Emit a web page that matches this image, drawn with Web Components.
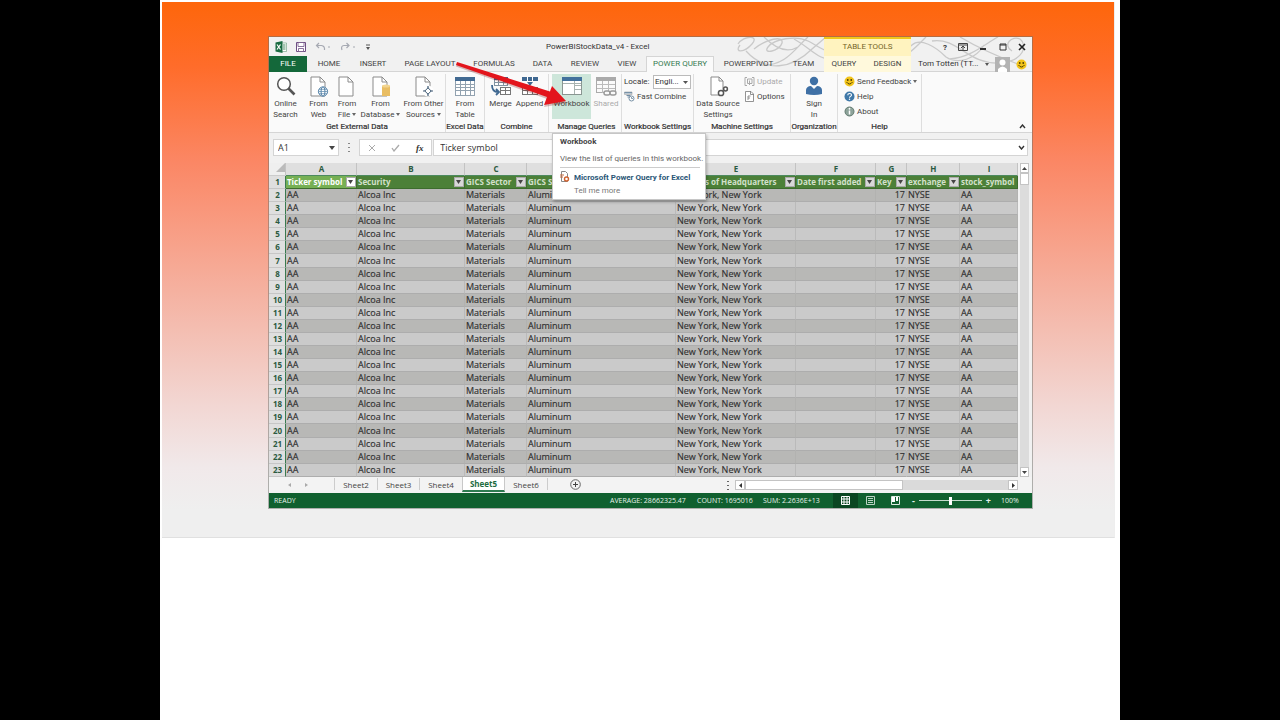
<!DOCTYPE html>
<html lang="en">
<head>
<meta charset="utf-8">
<title>PowerBIStockData_v4 - Excel</title>
<style>
html,body{margin:0;min-height:100%;background:#000}
body{font-family:Roboto,"Open Sans",sans-serif;font-size:8px;line-height:11px;color:#333}
</style>
</head>
<body>
<slide-page>
  <excel-window></excel-window>
</slide-page>
<script>
const define=(name,css,html)=>customElements.define(name,class extends HTMLElement{
  connectedCallback(){
    if(this.shadowRoot)return;
    const root=this.attachShadow({mode:"open"});
    const markup=typeof html==="function"?html(this):html;
    root.innerHTML=`<style>*{box-sizing:border-box}button,input,select{font:inherit;color:inherit;margin:0;padding:0;border:0;background:none;border-radius:0}${css}</style>${markup}`;
  }
});

/* Column list of a grid whose tracks share the width in the given proportions. */
const cols=(...w)=>"grid-template-columns:"+w.map(x=>`minmax(0,${x}fr)`).join(" ");
const caret=`<svg class="caret" width="4" height="3" viewBox="0 0 4 3" aria-hidden="true"><path d="M0 0h4L2 3z" fill="#666"/></svg>`;
const caretCss=".caret{display:inline-block;margin:0 0 1px 2px;vertical-align:middle}";

const page=`<path d="M3 1h9l5 5v14H3z" fill="#fff" stroke="#8b8b8b"/><path d="M12 1v5h5" fill="none" stroke="#8b8b8b"/>`;
const tableIcon=(c)=>`<rect x="1.500" y="1.500" width="19" height="18" fill="#fff" stroke="${c[1]}"/><rect x="1" y="1" width="20" height="4" fill="${c[0]}"/><path d="M6.500 5v14M11.500 5v14M16.500 5v14M2 8.500h18M2 11.500h18M2 14.500h18" stroke="${c[1]}" fill="none"/>`;
const icons={
  search:`<circle cx="9" cy="8" r="6.300" fill="#fff" stroke="#555" stroke-width="1.500"/><path d="M13.500 12.500l6 6" stroke="#555" stroke-width="2.600"/>`,
  web:`${page}<g fill="#fff" stroke="#5382a8"><circle cx="15" cy="15.500" r="4.600"/><ellipse cx="15" cy="15.500" rx="2" ry="4.600"/><path d="M10.500 15.500h9M11 13.300h8M11 17.700h8" fill="none" stroke-width=".7"/></g>`,
  file:page,
  database:`${page}<path d="M12 10h8v10h-8z" fill="#e9bd62"/><ellipse cx="16" cy="10" rx="4" ry="1.500" fill="#f2d48f"/>`,
  other:`${page}<circle cx="15" cy="15" r="5.500" fill="#fff"/><path d="M15 10v10M10 15h10" stroke="#405b75" stroke-width="1.200"/><path d="M15 11.800l3.200 3.200-3.200 3.200-3.200-3.200z" fill="#fff" stroke="#405b75"/>`,
  table:tableIcon(["#426a92","#92a2b0"]),
  merge:`<rect x="4.500" y="1.500" width="13" height="8" fill="#fff" stroke="#8293a2"/><path d="M4 1h14v3H4z" fill="#3f6891"/><path d="M8.500 4v5M13.500 4v5M5 6.500h12" stroke="#8293a2"/><rect x="10.500" y="11.500" width="10" height="7" fill="#fff" stroke="#777"/><path d="M11 14.500h9M15.500 12v6" stroke="#777"/><path d="M2 9c0 5 2 7 6 7M6 13l3 3-3 3" fill="none" stroke="#3f6891" stroke-width="1.800"/>`,
  append:`<path d="M3 1h16v4H3z" fill="#3f6891"/><path d="M8.500 1v4M13.500 1v4" stroke="#fff"/><path d="M8 6h6l-3 4z" fill="#3f6891"/><rect x="3.500" y="11.500" width="15" height="7" fill="#fff" stroke="#777"/><path d="M4 14.500h14M8.500 12v6M13.500 12v6" stroke="#777"/>`,
  workbook:`<rect x="1.500" y="1.500" width="19" height="17" fill="#fff" stroke="#8a9692"/><path d="M1 1h20v4H1z" fill="#42719c"/><path d="M13.500 5v13M14 9.500h6M14 13.500h6M2 7.500h18" stroke="#a8b3b0"/>`,
  shared:`<rect x="1.500" y="1.500" width="19" height="15" fill="#fafafa" stroke="#aaa"/><path d="M1 1h20v4H1z" fill="#aaa"/><path d="M7.500 5v12M13.500 5v12M2 8.500h18M2 12.500h18" stroke="#bbb"/><g fill="#fafafa" stroke="#999" stroke-width="1.400"><rect x="9" y="15" width="6" height="4" rx="2"/><rect x="15" y="15" width="6" height="4" rx="2"/></g>`,
  source:`<path d="M4 1h8l4 4v14H4z" fill="#fff" stroke="#8b8b8b"/><path d="M12 1v4h4" fill="none" stroke="#8b8b8b"/><g fill="#fff" stroke="#555" stroke-width="1.500"><circle cx="14" cy="17" r="2.600"/><circle cx="18.500" cy="13" r="1.900"/></g>`,
  person:`<circle cx="11" cy="5" r="4.200" fill="#3f70a5"/><path d="M3 18v-4c0-2 2-4 5-4l3 3 3-3c3 0 5 2 5 4v4q-8 2-16 0z" fill="#3f70a5"/>`,
  fast:`<path d="M1 2h15v5H1z" fill="#fff" stroke="#888"/><path d="M1 2h15v3H1z" fill="#7892a8"/><path d="M5 9h8M7 12h5" stroke="#607f9b" stroke-width="1.800"/><circle cx="15" cy="15" r="5" fill="#fff" stroke="#55758f" stroke-width="1.600"/><path d="M15 12v3h3" fill="none" stroke="#55758f" stroke-width="1.400"/>`,
  update:`<path d="M6 3H2v16h4M16 3h4v16h-4" fill="none" stroke="#aaa" stroke-width="2"/><path d="M7 6h9v9H7z" fill="none" stroke="#aaa" stroke-width="2"/><path d="M11 9v9" stroke="#aaa" stroke-width="2"/>`,
  options:`<path d="M3 1h11l5 5v15H3z" fill="#fff" stroke="#777" stroke-width="1.600"/><path d="M13 1v6h6M8 10v8M8 10h5M8 14h4" fill="none" stroke="#777" stroke-width="1.600"/>`,
  smile:`<circle cx="11" cy="11" r="10" fill="#f2c41a"/><circle cx="7.500" cy="8" r="1.800" fill="#514100"/><circle cx="14.500" cy="8" r="1.800" fill="#514100"/><path d="M5 12q6 8 12 0" fill="none" stroke="#514100" stroke-width="2"/>`,
  help:`<circle cx="11" cy="11" r="10" fill="#3f78a8"/><path d="M7.500 8.500c0-5 7.500-4.500 7.500-.5 0 3-4 2.500-4 5.500" fill="none" stroke="#fff" stroke-width="2.200"/><circle cx="11" cy="16.500" r="1.500" fill="#fff"/>`,
  about:`<circle cx="11" cy="11" r="9" fill="#8da39a" stroke="#61796f" stroke-width="2"/><path d="M11 9v8" stroke="#fff" stroke-width="3"/><circle cx="11" cy="5.500" r="1.800" fill="#fff"/>`
};
const svg=(name,size)=>`<svg width="${size}" height="${size}" viewBox="0 0 22 22" aria-hidden="true">${icons[name]}</svg>`;

define("slide-page",`
:host{display:block;width:75%;margin:0 auto;background:#fff;min-height:100vh;padding:2px 5px 0 2px;box-sizing:border-box}
.slide{background:linear-gradient(#fe660b 0,#ff6c2a 12%,#fb8765 30%,#f5b1a0 54%,#f2d6d2 75%,#f1e9ea 87%,#efefef 95%);padding:35px 82px 29px 107px;border-bottom:1px solid #e0e0e0;border-right:1px solid #eee}
`,`<main class="slide"><slot></slot></main>`);

define("excel-window",`
:host{display:block;position:relative;background:#f1f1f1;box-shadow:0 0 0 1px #6b6f6a80}
screen-tip{position:absolute;left:283px;top:96px}
.arrow{position:absolute;left:184px;top:22px;pointer-events:none}
.deco{position:absolute;right:0;top:0}
.top{position:relative}
`,`
<svg class="deco" width="296" height="34" viewBox="0 0 296 34" fill="none" stroke="#c9c9c9" stroke-width="1.300" aria-hidden="true">
<path d="M2 7C8-2 24-2 16 7S-2 16 4 8M18 12C30 2 48-2 46 6S26 18 32 10 60-2 72 4 96 22 112 12M10 14C30 36 56 32 76 12L90 0M24 28C50 30 60 10 72 0M58 2C76 12 80 22 100 24 128 24 130 4 146 0M28 0C40 12 52 16 62 10M150 26C170 22 180 10 190 0M172 2C156 14 166 18 176 8 184 0 200 10 210 20 222 28 240 22 248 8M196 4C222 0 232 28 264 26 288 24 292 8 284 2 276-2 266 8 276 14M214 22C236 20 250 6 262 0M224 0C244 12 262 20 290 30"/>
</svg>
<title-bar class="top"></title-bar><ribbon-tabs class="top"></ribbon-tabs><ribbon-panel></ribbon-panel><formula-bar></formula-bar><data-grid></data-grid><sheet-tabs></sheet-tabs><status-bar></status-bar>
<screen-tip></screen-tip>
<svg class="arrow" width="116" height="52" viewBox="0 0 116 52" aria-hidden="true"><path d="M4 3L97 33 98 28 114 43 91 47 94 39 3 6.500z" fill="#700" opacity=".25" transform="translate(0 1)"/><path d="M4 3L97 32.500 99 27 113 42 91 46 94 38 3 6z" fill="#e3151c"/></svg>
`);

define("title-bar",`
:host{display:grid;${cols(277,101,177,87,121)};height:19px}
.quick,.ctrl{display:flex;align-items:center}
.quick{gap:9px;padding-left:6px}
.quick button,.ctrl button{display:flex}
.name{text-align:center;line-height:20px;white-space:nowrap}
.tools{background:#fff3bf;border-top:2px solid #f1c719;text-align:center;line-height:16px;color:#756628;white-space:nowrap}
.ctrl{justify-content:space-between;padding:0 6px 0 32px}
`,`
<div class="quick">
<button aria-label="Excel"><svg width="12" height="12" viewBox="0 0 24 24"><path d="M13 4h10v17H13z" fill="#fff" stroke="#4a8a63"/><path d="M16 8h5M16 12h5M16 16h5" stroke="#4a8a63" stroke-width="2"/><path d="M1 3l14-3v24L1 21z" fill="#1a6b41"/><path d="M4 7l7 10M11 7L4 17" stroke="#fff" stroke-width="2.500"/></svg></button>
<button aria-label="Save"><svg width="10" height="10" viewBox="0 0 20 20"><path d="M1 1h18v18H1z" fill="#fff" stroke="#6e4f83" stroke-width="2"/><path d="M4 1h12v8H4zM5 13h10v6H5z" fill="#fff" stroke="#6e4f83" stroke-width="1.600"/></svg></button>
<button aria-label="Undo"><svg width="16" height="10" viewBox="0 0 32 20" fill="none" stroke="#a6a9b2" stroke-width="2.400"><path d="M8 2L3 7l5 5M3 7h10q7 1 6 9"/><path d="M26 10h4"/></svg></button>
<button aria-label="Redo"><svg width="16" height="10" viewBox="0 0 32 20" fill="none" stroke="#a6a9b2" stroke-width="2.400"><path d="M13 2l5 5-5 5M18 7H8Q1 8 4 16"/><path d="M26 10h4"/></svg></button>
<button aria-label="Customize Quick Access Toolbar"><svg width="6" height="8" viewBox="0 0 6 8"><path d="M1 2h4" stroke="#555"/><path d="M1 4h4L3 7z" fill="#555"/></svg></button>
</div>
<div class="name">PowerBIStockData_v4 - Excel</div><div></div><div class="tools">TABLE TOOLS</div>
<div class="ctrl">
<button aria-label="Help"><b>?</b></button>
<button aria-label="Ribbon display options"><svg width="10" height="8" viewBox="0 0 10 8"><path d="M.5.500h9v7h-9zM1 2h8M5 7V3M3 5l2-2 2 2" fill="none" stroke="#444"/></svg></button>
<button aria-label="Minimize"><svg width="8" height="8"><path d="M1 6h6" stroke="#333" stroke-width="2"/></svg></button>
<button aria-label="Restore"><svg width="8" height="8"><path d="M1 1h6v6H1zM1 2h6" fill="none" stroke="#333"/></svg></button>
<button aria-label="Close"><svg width="8" height="8"><path d="M1 1l6 6M7 1L1 7" stroke="#222" stroke-width="1.600"/></svg></button>
</div>`);

const tabs=[["FILE",38,"file"],["HOME",44],["INSERT",44],["PAGE LAYOUT",70],["FORMULAS",58],["DATA",39],["REVIEW",46],["VIEW",38],["POWER QUERY",68,"on"],["POWERPIVOT",69],["TEAM",41],["QUERY",40,"t"],["DESIGN",47,"t"]];
define("ribbon-tabs",`
:host{display:grid;${cols(...tabs.map(t=>t[1]),121)};height:16px;line-height:16px;border-bottom:1px solid #d5d5d5}
button{min-width:0;white-space:nowrap;display:flex;justify-content:center;color:#444}
.file{background:#14683a;color:#fff}
.on{background:#fafafa;border:1px solid #d5d5d5;border-bottom:0;color:#357a52;height:16px;line-height:14px}
.t{background:#fff9dc}
.user{min-width:0;display:flex;align-items:center;padding:0 5px 0 7px;gap:6px;white-space:nowrap}
.user span{flex:1}
svg{flex:none}
`,()=>tabs.map(([t,w,c])=>`<button class="${c||""}">${t}</button>`).join("")+
`<div class="user"><span>Tom Totten (TT...</span><svg width="4" height="3"><path d="M0 0h4L2 3z" fill="#555"/></svg><svg width="15" height="15" viewBox="0 0 15 15"><path d="M0 0h15v15H0z" fill="#b3b3b3"/><circle cx="7.500" cy="5.500" r="3" fill="#fff"/><path d="M3 15v-3q4.500-5 9 0v3z" fill="#fff"/></svg>${svg("smile",11)}</div>`);

define("ribbon-group",`
:host{display:flex;flex-direction:column;min-width:0;border-right:1px solid #dedede}
.items{flex:1;display:flex;min-height:0}
.label{line-height:11px;white-space:nowrap;display:flex;justify-content:center;color:#333;-webkit-text-stroke:.2px}
`,(el)=>`<div class="items"><slot></slot></div><div class="label">${el.getAttribute("label")}</div>`);

define("ribbon-button",`
:host{display:block;flex:var(--w) 1 0;min-width:0;color:#444}
:host([on]) button{background:#cde6da}
:host([off]){color:#aaa}
button{width:100%;height:45px;display:flex;flex-direction:column;align-items:center;line-height:11px;padding-top:2px;white-space:nowrap}
button>svg{display:block;flex:none}
${caretCss}
`,(el)=>{
  const lines=el.getAttribute("text").split("|").map(t=>`<span>${t}</span>`);
  if(el.hasAttribute("menu"))lines.push(lines.pop().replace("</span>",caret+"</span>"));
  return `<button>${svg(el.getAttribute("icon"),22)}${lines.join("")}</button>`;
});

define("ribbon-line",`
:host{display:block;color:#444}
:host([off]){color:#aaa}
button{display:flex;align-items:center;gap:2px;height:15px;white-space:nowrap}
${caretCss}
`,(el)=>`<button>${svg(el.getAttribute("icon"),11)}<span>${el.getAttribute("text")}${el.hasAttribute("menu")?caret:""}</span></button>`);

define("ribbon-panel",`
:host{display:grid;${cols(177,39,64,73,72,97,47,84,110)};height:61px;background:#fafafa;border-bottom:1px solid #d5d5d5;padding:2px 0 0}
.stack{display:flex;flex-direction:column;padding-left:2px;flex:var(--w,1) 1 0;min-width:0}
.loc{display:flex;align-items:center;justify-content:space-between;height:15px;padding-right:2px;white-space:nowrap}
.sel{position:relative;display:flex}
select{appearance:none;width:38px;height:14px;border:1px solid #bbb;background:#fff;padding:0 0 0 1px;line-height:12px}
.sel svg{position:absolute;right:3px;top:6px}
.end{display:flex;justify-content:flex-end;align-items:flex-end;padding:0 6px 3px}
.end button{display:flex}
.manage{padding-left:3px}
`,`
<ribbon-group label="Get External Data">
<ribbon-button icon="search" text="Online|Search" style="--w:33"></ribbon-button>
<ribbon-button icon="web" text="From|Web" style="--w:33"></ribbon-button>
<ribbon-button icon="file" text="From|File" menu style="--w:24"></ribbon-button>
<ribbon-button icon="database" text="From|Database" menu style="--w:43"></ribbon-button>
<ribbon-button icon="other" text="From Other|Sources" menu style="--w:43"></ribbon-button></ribbon-group>
<ribbon-group label="Excel Data"><ribbon-button icon="table" text="From|Table" style="--w:1"></ribbon-button></ribbon-group>
<ribbon-group label="Combine"><ribbon-button icon="merge" text="Merge" style="--w:31"></ribbon-button><ribbon-button icon="append" text="Append" style="--w:27"></ribbon-button><div style="flex:5"></div></ribbon-group>
<ribbon-group label="Manage Queries" class="manage"><ribbon-button icon="workbook" text="Workbook" on style="--w:39"></ribbon-button><ribbon-button icon="shared" text="Shared" off style="--w:30"></ribbon-button></ribbon-group>
<ribbon-group label="Workbook Settings"><div class="stack"><div class="loc"><label for="loc">Locale:</label><span class="sel"><select id="loc"><option>Engli...</option></select><svg width="5" height="3"><path d="M0 0h5L2.500 3z" fill="#555"/></svg></span></div><ribbon-line icon="fast" text="Fast Combine"></ribbon-line></div></ribbon-group>
<ribbon-group label="Machine Settings"><ribbon-button icon="source" text="Data Source|Settings" style="--w:48"></ribbon-button><div class="stack" style="--w:46"><ribbon-line icon="update" text="Update" off></ribbon-line><ribbon-line icon="options" text="Options"></ribbon-line></div></ribbon-group>
<ribbon-group label="Organization"><ribbon-button icon="person" text="Sign|In" style="--w:1"></ribbon-button></ribbon-group>
<ribbon-group label="Help"><div class="stack" style="padding-left:6px"><ribbon-line icon="smile" text="Send Feedback" menu></ribbon-line><ribbon-line icon="help" text="Help"></ribbon-line><ribbon-line icon="about" text="About"></ribbon-line></div></ribbon-group>
<div class="end"><button aria-label="Collapse the ribbon"><svg width="7" height="5"><path d="M1 4l2.500-3L6 4" fill="none" stroke="#333" stroke-width="1.400"/></svg></button></div>`);

define("formula-bar",`
:host{display:grid;${cols(66,20,73,595)};height:30px;padding:6px 4px 7px 4px;background:#f1f1f1;font-family:"Open Sans",sans-serif}
.box{background:#fff;border:1px solid #d4d4d4;height:17px;display:flex;align-items:center}
.name{padding:0 3px 0 4px}
.dots{display:flex;align-items:center;justify-content:center}
.fx{justify-content:space-around}
.text{padding:0 2px 0 6px;margin-left:1px}
input{min-width:0;flex:1;font-size:9px;width:10px}
button{display:flex}
i{font:italic bold 9px "Liberation Serif",serif}
`,`
<div class="box name"><input aria-label="Name box" value="A1"><svg width="6" height="4"><path d="M0 0h6L3 4z" fill="#444"/></svg></div>
<div class="dots"><svg width="2" height="9"><path d="M0 0h2v1H0zM0 4h2v1H0zM0 8h2v1H0z" fill="#888"/></svg></div>
<div class="box fx"><button aria-label="Cancel"><svg width="8" height="8"><path d="M1 1l6 6M7 1L1 7" stroke="#aaa"/></svg></button><button aria-label="Enter"><svg width="9" height="8"><path d="M1 4l2 3 5-6" fill="none" stroke="#aaa" stroke-width="1.300"/></svg></button><button aria-label="Insert function"><i>fx</i></button></div>
<div class="box text"><input aria-label="Formula" value="Ticker symbol"><svg width="7" height="5"><path d="M1 1l2.500 3L6 1" fill="none" stroke="#333" stroke-width="1.400"/></svg></div>`);

define("data-grid",`
:host{display:grid;${cols(749,14)};background:#f1f1f1;height:314px;font-family:"Open Sans",sans-serif}
table{height:100%;border-collapse:separate;border-spacing:0;table-layout:fixed;width:100%;font-size:9px;line-height:12px;color:#2f2f2f}
.wrap{min-width:0}
td,th{padding:0 0 0 1px;text-align:left;white-space:nowrap;overflow:hidden;font-weight:400;height:12px}
.letters th{background:#dfdfdf;text-align:center;font-size:8px;color:#2c5a41;border-right:1px solid #c3c3c3;border-bottom:1px solid #4d8a5f;font-weight:700}
.letters th:first-child{background:#efefef;border-bottom-color:#ccc;text-align:right}
tbody th{background:#dfdfdf;color:#2c5a41;font-size:8px;font-weight:700;text-align:center;border-right:1px solid #3a7a50;border-bottom:1px solid #c6c6c6}
tbody td{background:#cacaca;border-right:1px solid #bababa;border-bottom:1px solid #adadad;-webkit-text-stroke:.15px}
tbody tr:nth-child(even) td{background:#b8b8b6;border-right-color:#b2b2b0}
tbody .head td{background:#4c8038;color:#d3e0cb;font-weight:700;font-size:8px;border-color:#3d6c2e;-webkit-text-stroke:0}
tbody .head td:nth-child(2){background:#76b054;color:#fff}
.cell{display:flex;justify-content:space-between;align-items:center}
.cell button{flex:none;width:10px;height:10px;background:#d8d8d8;border:1px solid #aaa;display:flex;align-items:center;justify-content:center}
.head td:nth-child(2) button{background:#fff}
tbody .num{text-align:right;padding-right:1px;border-right-color:transparent}
.sb{padding:0 3px 0 2px;display:flex;flex-direction:column}
.sb button{height:10px;border:1px solid #c4c4c4;background:#fff;display:flex;align-items:center;justify-content:center}
.thumb{height:12px;background:#fff;border:1px solid #c4c4c4}
.track{flex:1;background:#dcdcdc}
`,()=>{
  const w=[17,71,108,62,149,120,80,31,53,58],sum=749;
  const heads=["Ticker symbol","Security","GICS Sector","GICS Sub Industry","Address of Headquarters","Date first added","Key","exchange","stock_symbol"];
  const row=["AA","Alcoa Inc","Materials","Aluminum","New York, New York","","17","NYSE","AA"];
  const f=`<button aria-label="Filter"><svg width="5" height="4"><path d="M0 0h5L2.500 4z" fill="#444"/></svg></button>`;
  return `<div class="wrap"><table><colgroup>${w.map(x=>`<col style="width:${x/sum*100}%">`).join("")}</colgroup>
<thead><tr class="letters"><th><svg width="9" height="9"><path d="M9 0v9H0z" fill="#bbb"/></svg></th>${[..."ABCDEFGHI"].map(l=>`<th scope="col">${l}</th>`).join("")}</tr></thead>
<tbody><tr class="head"><th scope="row">1</th>${heads.map((h,i)=>`<td><div class="cell"><span>${h}</span>${i<8?f:""}</div></td>`).join("")}</tr>
${Array.from({length:22},(_,n)=>`<tr><th scope="row">${n+2}</th>${row.map((c,i)=>`<td${i===6?' class="num"':""}>${c}</td>`).join("")}</tr>`).join("")}</tbody></table></div>
<div class="sb"><button aria-label="Scroll up"><svg width="5" height="3"><path d="M0 3h5L2.500 0z" fill="#444"/></svg></button><div class="thumb"></div><div class="track"></div><button aria-label="Scroll down"><svg width="5" height="3"><path d="M0 0h5L2.500 3z" fill="#444"/></svg></button></div>`;
});

define("sheet-tabs",`
:host{display:grid;${cols(65,43,42,43,43,42,55,118,15,283,14)};height:16px;background:#f3f3f3;color:#444;font-family:"Open Sans",sans-serif}
button{display:flex;align-items:center;justify-content:center;white-space:nowrap}
.nav{display:flex;justify-content:center;gap:14px;padding-right:8px}
.tab{border-left:1px solid #ccc;margin:1px 0 3px}
.on{background:#fff;border:1px solid #c8c8c8;border-top:0;border-bottom:2px solid #2e7b50;color:#1d6b41;font-weight:700;margin:0 0 1px}
.last{border-left:0}
.add{border-left:1px solid #ccc;margin:1px 0 3px}
.hs{display:flex;height:10px;margin:3px 0 0;background:#dadada}
.hs button{width:10px;background:#fff;border:1px solid #c4c4c4}
.thumb{flex:0 0 56%;background:#fff;border:1px solid #c4c4c4}
.rest{flex:1}
`,`<div class="nav"><button aria-label="Previous sheets"><svg width="3" height="4"><path d="M3 0v4L0 2z" fill="#aaa"/></svg></button><button aria-label="Next sheets"><svg width="3" height="4"><path d="M0 0v4l3-2z" fill="#aaa"/></svg></button></div>
<button class="tab">Sheet2</button><button class="tab">Sheet3</button><button class="tab">Sheet4</button><button class="tab on">Sheet5</button><button class="tab last">Sheet6</button>
<button class="add" aria-label="New sheet"><svg width="11" height="11"><circle cx="5.500" cy="5.500" r="4.800" fill="none" stroke="#666"/><path d="M5.500 3v5M3 5.500h5" stroke="#444"/></svg></button><div></div>
<button aria-label="Resize"><svg width="2" height="9"><path d="M0 0h2v1H0zM0 4h2v1H0zM0 8h2v1H0z" fill="#666"/></svg></button>
<div class="hs"><button aria-label="Scroll left"><svg width="3" height="5"><path d="M3 0v5L0 2.500z" fill="#333"/></svg></button><div class="thumb"></div><div class="rest"></div><button aria-label="Scroll right"><svg width="3" height="5"><path d="M0 0v5l3-2.500z" fill="#333"/></svg></button></div>`);

define("status-bar",`
:host{display:grid;${cols(341,87,66,70,25,25,25,84,40)};height:15px;background:#10602f;color:#e6f2ea;font-family:"Open Sans",sans-serif;font-size:7px;line-height:15px;white-space:nowrap}
.ready{padding-left:5px}
.view{display:flex;align-items:center;justify-content:center}
.on{background:#0a4621}
.zoom{display:flex;align-items:center;justify-content:space-between;padding:0 1px 0 4px}
.zoom button{display:flex;line-height:15px;font-size:9px;font-weight:700}
input{appearance:none;height:15px;flex:1;min-width:0;margin:0 4px;background:linear-gradient(#c5dccd,#c5dccd) center/100% 1px no-repeat}
input::-webkit-slider-thumb{appearance:none;width:3px;height:8px;background:#fff}
.pct{padding-left:9px}
`,`<div class="ready">READY</div><div>AVERAGE: 28662325.47</div><div>COUNT: 1695016</div><div>SUM: 2.2636E+13</div>
<button class="view on" aria-label="Normal view"><svg width="9" height="9" fill="none" stroke="#fff"><path d="M.5.500h8v8h-8zM3 1v7M6 1v7M1 3h7M1 6h7"/></svg></button>
<button class="view" aria-label="Page layout view"><svg width="9" height="9" fill="none" stroke="#bcd3c4"><path d="M.5.500h8v8h-8zM2 2.500h5M2 4.500h5M2 6.500h5"/></svg></button>
<button class="view" aria-label="Page break view"><svg width="9" height="9"><path d="M.5.500h8v8h-8z" fill="none" stroke="#dcebe1"/><path d="M1 1h3v5H1zM5 1h2v4H5z" fill="#fff"/></svg></button>
<div class="zoom"><button aria-label="Zoom out">-</button><input type="range" aria-label="Zoom"><button aria-label="Zoom in">+</button></div><div class="pct">100%</div>`);

define("screen-tip",`
:host{display:block;background:#fff;border:1px solid #c6c6c6;box-shadow:1px 2px 3px #0004;padding:2px 5px 3px 7px;width:154px;box-sizing:border-box;height:67px;color:#666;white-space:nowrap}
b{display:block;color:#444;line-height:12px}
p{margin:4px 0 0;line-height:13px;padding-bottom:2px;border-bottom:1px solid #ccc}
.more{display:flex;gap:4px;padding-top:3px}
a{display:block;color:#2b5777;font-weight:700;text-decoration:none;line-height:13px}
a+a{color:#777;font-weight:400}
`,`<b>Workbook</b><p>View the list of queries in this workbook.</p><div class="more"><svg width="10" height="12" viewBox="0 0 10 12"><path d="M1.500.500h4l2 2v8h-6z" fill="#fff" stroke="#888"/><path d="M0 4h4M0 6h3" stroke="#c66a3c"/><circle cx="6.500" cy="8" r="2" fill="#fff" stroke="#d0622f" stroke-width="1.400"/></svg><div><a href="#">Microsoft Power Query for Excel</a><a href="#">Tell me more</a></div></div>`);
</script>
</body>
</html>
